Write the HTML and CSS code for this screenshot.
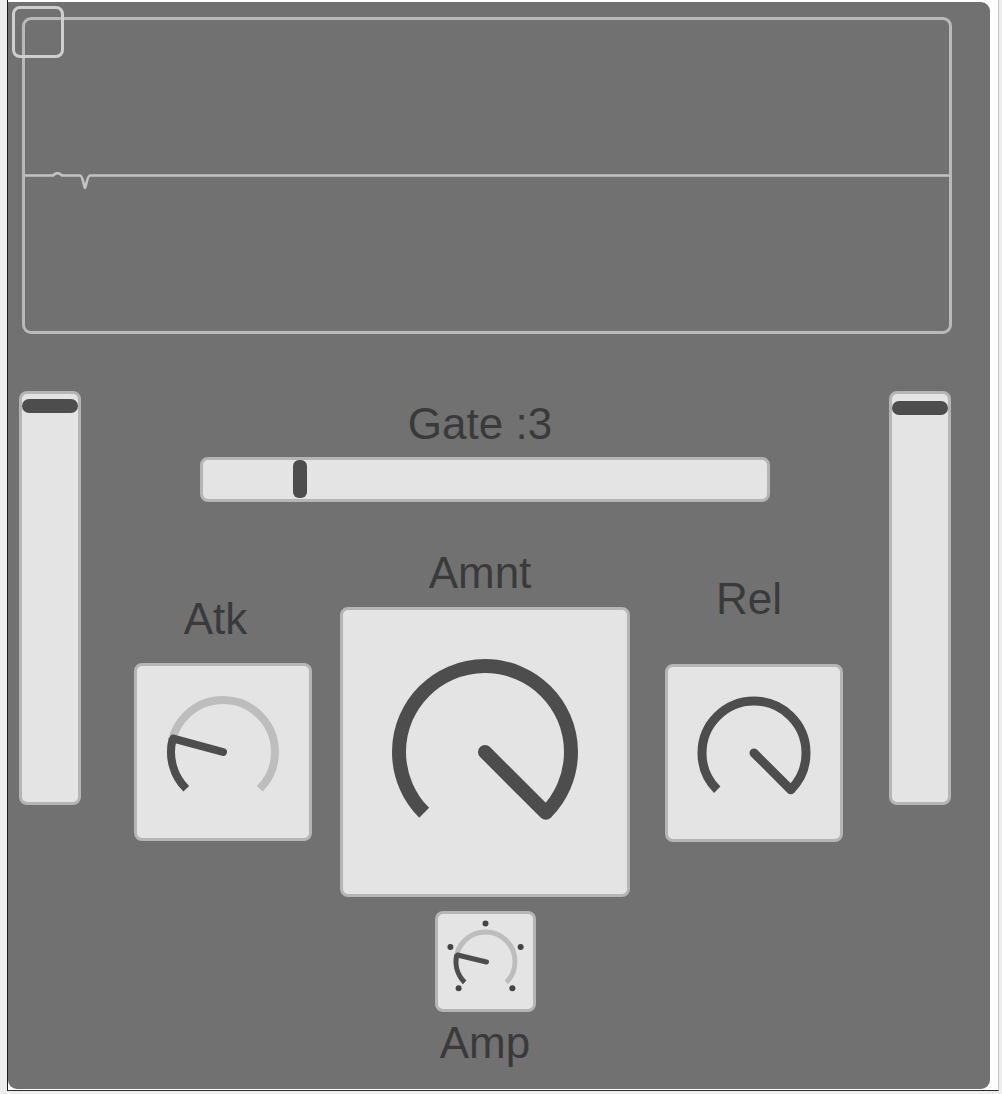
FILE: index.html
```html
<!DOCTYPE html>
<html>
<head>
<meta charset="utf-8">
<link rel="stylesheet" href="styles.css">
</head>
<body>
<div class="window">
  <div class="panel">
    <div class="corner-box"></div>
    <div class="scope">
      <svg class="scope-svg" viewBox="0 0 924 311" width="924" height="311">
        <path d="M0 155.5 H28 Q32.5 151 37 155.5 H55 C58 155.5 59 168 60 168 C61 168 62 155.5 65 155.5 H924" fill="none" stroke="#c3c3c3" stroke-width="2.6"/>
      </svg>
    </div>
    <div class="controls">
      <div class="vslider"><div class="vhandle"></div></div>
      <div class="center">
        <div class="label shift5">Gate :3</div>
        <div class="hslider"><div class="hhandle"></div></div>
        <div class="knob-row">
          <div class="knob-col atk-col">
            <div class="label shift7">Atk</div>
            <div class="knob-box small atk-box">
              <svg viewBox="0 0 172 172" width="172" height="172">
                <path d="M49.23 122.77 A52 52 0 1 1 122.77 122.77" fill="none" stroke="#bdbdbd" stroke-width="8"/>
                <path d="M49.23 122.77 A52 52 0 0 1 35.77 72.54" fill="none" stroke="#4d4d4d" stroke-width="8"/>
                <path d="M86 86 L36.5 72.7" fill="none" stroke="#4d4d4d" stroke-width="8" stroke-linecap="round"/>
              </svg>
            </div>
          </div>
          <div class="knob-col amnt-col">
            <div class="label shift5">Amnt</div>
            <div class="knob-box big">
              <svg viewBox="0 0 284 284" width="284" height="284">
                <path d="M81.19 202.81 A86 86 0 1 1 202.81 202.81" fill="none" stroke="#4d4d4d" stroke-width="14"/>
                <path d="M142 142 L202.81 202.81" fill="none" stroke="#4d4d4d" stroke-width="14" stroke-linecap="round"/>
              </svg>
            </div>
          </div>
          <div class="knob-col rel-col">
            <div class="label shift5">Rel</div>
            <div class="knob-box small rel-box">
              <svg viewBox="0 0 172 172" width="172" height="172">
                <path d="M49.23 122.77 A52 52 0 1 1 122.77 122.77" fill="none" stroke="#4d4d4d" stroke-width="9"/>
                <path d="M86 86 L122.77 122.77" fill="none" stroke="#4d4d4d" stroke-width="9" stroke-linecap="round"/>
              </svg>
            </div>
          </div>
        </div>
        <div class="amp">
          <div class="knob-box tiny">
            <svg viewBox="0 0 95 95" width="95" height="95">
              <path d="M26.64 68.36 A29.5 29.5 0 1 1 68.36 68.36" fill="none" stroke="#bdbdbd" stroke-width="5"/>
              <path d="M26.64 68.36 A29.5 29.5 0 0 1 18.76 40.86" fill="none" stroke="#4d4d4d" stroke-width="5"/>
              <path d="M48.5 48 L19.5 41" fill="none" stroke="#4d4d4d" stroke-width="5" stroke-linecap="round"/>
              <g fill="#444444">
                <circle cx="20.63" cy="74.37" r="3"/>
                <circle cx="12.39" cy="32.96" r="3"/>
                <circle cx="47.5" cy="9.5" r="3"/>
                <circle cx="82.61" cy="32.96" r="3"/>
                <circle cx="74.37" cy="74.37" r="3"/>
              </g>
            </svg>
          </div>
          <div class="label amp-label">Amp</div>
        </div>
      </div>
      <div class="vslider"><div class="vhandle right"></div></div>
    </div>
  </div>
</div>
</body>
</html>
```

FILE: styles.css
```css
* { box-sizing: border-box; }

html, body {
  margin: 0;
  padding: 0;
}

body {
  background: #eeeeee;
  font-family: "Liberation Sans", Arial, sans-serif;
}

.window {
  margin-left: 7px;
  width: 992px;
  height: 1091px;
  padding-top: 2px;
  background: #ffffff;
  border-left: 1px solid #1c1c1c;
  border-right: 1px solid #c4c4c4;
  border-bottom: 1px solid #2c2c2c;
}

.panel {
  position: relative;
  width: 982px;
  height: 1087px;
  background: #717171;
  border-radius: 0 9px 9px 9px;
  overflow: hidden;
}

.corner-box {
  position: absolute;
  left: 4px;
  top: 4px;
  width: 52px;
  height: 52px;
  border: 3px solid #cfcfcf;
  border-radius: 8px;
}

.scope {
  margin: 15px 0 0 14px;
  width: 930px;
  height: 317px;
  border: 3px solid #b9b9b9;
  border-radius: 9px;
}

.scope-svg {
  display: block;
}

.controls {
  margin-top: 57px;
  padding-left: 11px;
  display: grid;
  grid-template-columns: 62px 808px 62px;
  align-items: start;
}

.vslider {
  height: 414px;
  background: #e4e4e4;
  border: 3px solid #b5b5b5;
  border-radius: 8px;
  padding-top: 5px;
}

.vhandle {
  height: 14px;
  background: #4d4d4d;
  border-radius: 7px;
}

.vhandle.right {
  margin-top: 2px;
}

.center {
  padding-top: 8px;
  display: flex;
  flex-direction: column;
  align-items: center;
}

.label {
  font-size: 44px;
  line-height: 50px;
  height: 50px;
  color: #3a3a3a;
  text-align: center;
  white-space: nowrap;
  align-self: stretch;
}

.shift5 { padding-right: 10px; }
.shift7 { padding-right: 15px; }

.hslider {
  margin-top: 8px;
  width: 570px;
  height: 45px;
  background: #e4e4e4;
  border: 3px solid #b5b5b5;
  border-radius: 8px;
  display: flex;
  align-items: flex-start;
  padding-left: 90px;
}

.hhandle {
  width: 14px;
  height: 38px;
  background: #4d4d4d;
  border-radius: 6px;
}

.knob-row {
  margin-top: 46px;
  align-self: stretch;
  display: flex;
  align-items: flex-start;
  padding-left: 53px;
}

.knob-col {
  display: flex;
  flex-direction: column;
}

.atk-col {
  width: 178px;
  margin-top: 46px;
}

.amnt-col {
  width: 290px;
  margin-left: 28px;
}

.rel-col {
  width: 178px;
  margin-left: 35px;
  margin-top: 26px;
}

.knob-box {
  background: #e4e4e4;
  border: 3px solid #b5b5b5;
  border-radius: 8px;
}

.knob-box svg {
  display: block;
}

.small {
  width: 178px;
  height: 178px;
}

.atk-box { margin-top: 19px; }
.rel-box { margin-top: 40px; }

.big {
  width: 290px;
  height: 290px;
  margin-top: 9px;
}

.amp {
  margin-top: 14px;
  display: flex;
  flex-direction: column;
  align-items: center;
}

.tiny {
  width: 101px;
  height: 101px;
}

.amp-label {
  margin-top: 6px;
}
```
